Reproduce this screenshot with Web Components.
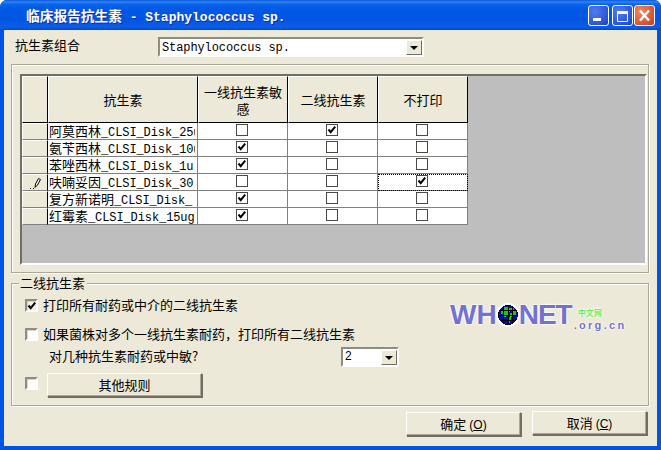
<!DOCTYPE html>
<html>
<head>
<meta charset="utf-8">
<style>
  html, body { margin: 0; padding: 0; }
  body { font: 13px "Noto Sans CJK SC", "Liberation Sans", sans-serif; color: #000; }
</style>
</head>
<body>
<win-window>
  <win-titlebar slot="title"><globe-icon slot="icon" size="15"></globe-icon>临床报告抗生素<latin-text> - Staphylococcus sp.</latin-text></win-titlebar>

  <div style="display:flex;align-items:center;padding:7px 0 0 11px;height:20px">
    <span style="width:143px;margin-top:-5px">抗生素组合</span>
    <win-combo style="width:266px"><latin-text>Staphylococcus sp.</latin-text></win-combo>
  </div>

  <win-group style="margin:7px 0 0 7px;height:209px;padding:9px 0 0 8px">
    <abx-grid></abx-grid>
  </win-group>

  <win-group legend="二线抗生素" style="margin:10px 0 0 7px;height:123px">
    <div style="display:grid;grid-template-columns:1fr 190px;height:100%">
      <div style="display:flex;flex-direction:column;padding:15px 0 0 13px">
        <div style="display:flex;align-items:center;gap:5px;height:13px">
          <win-check checked></win-check><span style="margin-top:-2px">打印所有耐药或中介的二线抗生素</span>
        </div>
        <div style="display:flex;align-items:center;gap:5px;height:13px;margin-top:16px;white-space:nowrap">
          <win-check></win-check><span style="margin-top:-2px">如果菌株对多个一线抗生素耐药，打印所有二线抗生素</span>
        </div>
        <div style="display:flex;align-items:center;height:20px;margin-top:6px;padding-left:24px;white-space:nowrap">
          <span style="width:292px;margin-top:-3px">对几种抗生素耐药或中敏?</span>
          <win-combo style="width:58px;font:12px 'Liberation Sans',sans-serif">2</win-combo>
        </div>
        <div style="display:flex;align-items:center;gap:9px;height:24px;margin-top:6px">
          <win-check style="margin-top:-3px"></win-check><win-button style="width:155px">其他规则</win-button>
        </div>
      </div>
      <whonet-logo></whonet-logo>
    </div>
  </win-group>

  <div style="display:flex;justify-content:flex-end;align-items:flex-start;gap:11px;padding:5px 10px 0 0">
    <win-button style="width:115px;margin-top:1px">确定 <key-hint>O</key-hint></win-button>
    <win-button style="width:115px">取消 <key-hint>C</key-hint></win-button>
  </div>
</win-window>

<script>
customElements.define('latin-text', class extends HTMLElement {
  constructor () {
    super()
    this.attachShadow({ mode: 'open' }).innerHTML = `<style>
        :host { display: inline; font: var(--latin-font, 12px "Liberation Mono", monospace); letter-spacing: var(--latin-spacing, -0.1px); }
      </style><slot></slot>`
  }
})

customElements.define('key-hint', class extends HTMLElement {
  constructor () {
    super()
    this.attachShadow({ mode: 'open' }).innerHTML = `<style>
        :host { display: inline; font: 12px "Liberation Sans", sans-serif; }
        u { text-underline-offset: 1px; }
      </style>(<u><slot></slot></u>)`
  }
})

customElements.define('globe-icon', class extends HTMLElement {
  constructor () {
    super()
    const size = this.getAttribute('size') || 20
    this.attachShadow({ mode: 'open' }).innerHTML = `
      <style>
        :host { display: block; width: ${size}px; height: ${size}px; }
        svg { display: block; width: 100%; height: 100%; }
      </style>
      <svg viewBox="0 0 20 20" shape-rendering="crispEdges">
        <defs><clipPath id="c"><circle cx="10" cy="10" r="9.5"/></clipPath></defs>
        <circle cx="10" cy="10" r="10" fill="#000"/>
        <g clip-path="url(#c)">
          <rect width="20" height="20" fill="#0a0aa8"/>
          <path d="M5 2h5v2h2v3h-2v3H8v2H5V9H3V5h2z" fill="#18c818"/>
          <path d="M11 3h5v3h2v4h-3v2h-3V8h2V5h-3z" fill="#18c818"/>
          <path d="M10 12h3v3h-1v3h-2z" fill="#18c818"/>
          <path d="M1 5.500h18M0 10.500h20M1 15h18" stroke="#000" stroke-width="1" fill="none"/>
          <path d="M5.500 1v18M10 0v20M14.500 1v18" stroke="#000" stroke-width="1" fill="none"/>
        </g>
      </svg>`
  }
})

customElements.define('win-window', class extends HTMLElement {
  constructor () {
    super()
    this.attachShadow({ mode: 'open' }).innerHTML = `
      <style>
        :host { display: flex; flex-direction: column; width: 661px; height: 450px; box-sizing: border-box; background: #0054e3; border-radius: 7px 7px 0 0; overflow: hidden; }
        #body { flex: 1; margin: 0 4px 4px 4px; background: #ece9d8; }
      </style>
      <slot name="title"></slot>
      <div id="body"><slot></slot></div>`
  }
})

customElements.define('win-titlebar', class extends HTMLElement {
  constructor () {
    super()
    this.attachShadow({ mode: 'open' }).innerHTML = `
      <style>
        :host {
          display: flex; align-items: center; height: 30px; box-sizing: border-box; padding: 1px 6px 0 8px;
          background: linear-gradient(#0a57d8 0, #2f86f5 2px, #0a63ea 4px, #0058e6 10px, #0355e0 20px, #0a5ee8 27px, #0048c8 30px);
          color: #fff; font-weight: bold; font-size: 13.700px; white-space: pre;
          text-shadow: 1px 1px 0 #0f2f9c;
          --latin-font: bold 13px "Liberation Mono", monospace;
          --latin-spacing: 0;
        }
        #text { flex: 1; padding-left: 3px; margin-top: -1px; }
        .b { width: 21px; height: 21px; box-sizing: border-box; border: 1px solid #fff; border-radius: 3px; margin-left: 3px; display: flex; }
        .blue { background: radial-gradient(circle at 30% 30%, #4f7df0, #2a55d8 70%, #1c3fc0); }
        .red { background: radial-gradient(circle at 30% 30%, #ee8a66, #db5530 65%, #c23e18); margin-left: 1px; }
        svg { display: block; }
      </style>
      <slot name="icon"></slot>
      <div id="text"><slot></slot></div>
      <div class="b blue"><svg width="19" height="19"><rect x="4" y="12" width="8" height="3" fill="#fff"/></svg></div>
      <div class="b blue"><svg width="19" height="19"><path d="M4.500 6.500h10v9h-10z" fill="none" stroke="#fff"/><rect x="4" y="5" width="11" height="3" fill="#fff"/></svg></div>
      <div class="b red"><svg width="19" height="19"><path d="M5 4.500l9 10M14 4.500l-9 10" stroke="#fff" stroke-width="2.400" fill="none"/></svg></div>`
  }
})

customElements.define('win-combo', class extends HTMLElement {
  constructor () {
    super()
    this.attachShadow({ mode: 'open' }).innerHTML = `
      <style>
        :host {
          display: flex; height: 20px; box-sizing: border-box; background: #fff; padding-left: 2px;
          border: 2px solid; border-color: #8f8d80 #fff #fff #8f8d80; white-space: nowrap;
        }
        #v { flex: 1; line-height: 14px; overflow: hidden; }
        #b { width: 16px; height: 15px; margin: 1px 0 0 0; box-sizing: border-box; background: #ece9d8; border: 1px solid; border-color: #fff #716f64 #716f64 #fff; display: flex; align-items: center; justify-content: center; }
        svg { display: block; }
      </style>
      <div id="v"><slot></slot></div>
      <div id="b"><svg width="8" height="4"><path d="M0 0h8L4 4z" fill="#000"/></svg></div>`
  }
})

customElements.define('win-group', class extends HTMLElement {
  constructor () {
    super()
    const legend = this.getAttribute('legend')
    this.attachShadow({ mode: 'open' }).innerHTML = `
      <style>
        :host {
          display: block; position: relative; box-sizing: border-box; width: 638px;
          border: 1px solid #aca899; box-shadow: 1px 1px 0 #fff, inset 1px 1px 0 #fff;
        }
        #l { position: absolute; left: 7px; top: -9px; padding: 0 2px 0 1px; background: #ece9d8; line-height: 15px; }
      </style>
      ${legend ? `<div id="l">${legend}</div>` : ''}
      <slot></slot>`
  }
})

customElements.define('win-check', class extends HTMLElement {
  constructor () {
    super()
    const checked = this.hasAttribute('checked')
    this.attachShadow({ mode: 'open' }).innerHTML = `
      <style>
        :host { display: block; flex: none; width: 13px; height: 13px; box-sizing: border-box; background: #fff; border: 2px solid; border-color: #8f8d80 #fff #fff #8f8d80; box-shadow: inset 1px 1px 0 #d8d5c4; }
        :host([flat]) { width: 12px; height: 12px; margin: -2px 0 0 -1px; border: 1px solid #4a4a44; box-shadow: none; }
        :host([checked]:not([flat])) { background: #f1efe2; }
        svg { display: block; }
      </style>
      ${checked ? '<svg width="10" height="10" viewBox="0 0 10 10"><path d="M1.500 4.500l2.200 2.600L8.200 1.600" fill="none" stroke="#000" stroke-width="2"/></svg>' : ''}`
  }
})

customElements.define('win-button', class extends HTMLElement {
  constructor () {
    super()
    this.attachShadow({ mode: 'open' }).innerHTML = `
      <style>
        :host {
          display: flex; align-items: center; justify-content: center; height: 24px; box-sizing: border-box; white-space: nowrap;
          background: #ece9d8; border: 1px solid; border-color: #fff #716f64 #716f64 #fff; box-shadow: 1px 1px 0 #716f64, inset -1px -1px 0 #aca899;
        }
        div { margin-top: -2px; }
      </style><div><slot></slot></div>`
  }
})

const ABX_ROWS = [
  ['阿莫西林', '_CLSI_Disk_25ug', 0, 1, 0],
  ['氨苄西林', '_CLSI_Disk_10ug', 1, 0, 0],
  ['苯唑西林', '_CLSI_Disk_1u', 1, 0, 0],
  ['呋喃妥因', '_CLSI_Disk_30', 0, 0, 1],
  ['复方新诺明', '_CLSI_Disk_', 1, 0, 0],
  ['红霉素', '_CLSI_Disk_15ug', 1, 0, 0]
]

customElements.define('abx-grid', class extends HTMLElement {
  constructor () {
    super()
    const check = (on) => `<win-check flat ${on ? 'checked' : ''}></win-check>`
    const rows = ABX_ROWS.map((r, i) => `
      <div class="ind">${i === 3 ? this.pencil() : ''}</div>
      <div class="cell name"><div class="t">${r[0]}<latin-text>${r[1]}</latin-text></div></div>
      <div class="cell">${check(r[2])}</div>
      <div class="cell">${check(r[3])}</div>
      <div class="cell${i === 3 ? ' focus' : ''}">${check(r[4])}</div>`).join('')
    this.attachShadow({ mode: 'open' }).innerHTML = `
      <style>
        :host {
          display: block; width: 627px; height: 191px; box-sizing: border-box; background: #bebebe;
          border: 2px solid; border-color: #716f64 #fff #fff #716f64;
        }
        #g { display: grid; grid-template-columns: 26px 150px 90px 90px 90px; grid-template-rows: 47px repeat(6, 17px); width: max-content; }
        .h, .ind { background: #ece9d8; box-sizing: border-box; border: 1px solid; border-color: #fff #000 #000 #fff; }
        .h { display: flex; align-items: center; justify-content: center; text-align: center; line-height: 17px; padding: 0 4px; }
        .ind { border-color: #fff #000 #808080 #fff; display: flex; align-items: center; justify-content: flex-end; padding-right: 6px; }
        .cell { background: #fff; box-sizing: border-box; border-right: 1px solid #808080; border-bottom: 1px solid #808080; display: flex; align-items: center; justify-content: center; }
        .name { display: block; padding-left: 1px; overflow: hidden; white-space: nowrap; line-height: 15px; }
        .t { overflow: hidden; height: 16px; margin-right: 2px; }
        .focus { outline: 1px dotted #000; outline-offset: -1px; }
        svg { display: block; }
      </style>
      <div id="g">
        <div class="h"></div>
        <div class="h">抗生素</div>
        <div class="h">一线抗生素敏感</div>
        <div class="h">二线抗生素</div>
        <div class="h">不打印</div>
        ${rows}
      </div>`
  }

  pencil () {
    return '<svg width="11" height="12" viewBox="0 0 11 12"><path d="M5 10.500L5.500 7l3-5.500 2 1-3 5.500z" fill="#fff" stroke="#000"/><path d="M0 11.500h1M3 11.500h1" stroke="#000"/></svg>'
  }
})

customElements.define('whonet-logo', class extends HTMLElement {
  constructor () {
    super()
    this.attachShadow({ mode: 'open' }).innerHTML = `
      <style>
        :host { display: block; padding: 15px 0 0 0; margin-left: -8px; color: #7373cf; }
        #r { display: flex; align-items: flex-start; text-shadow: 0 0 2px #fff, 0 0 2px #fff, 0 0 3px #fff; }
        .big { font: bold 28px/32px "Liberation Sans", sans-serif; }
        .net { letter-spacing: -1px; }
        globe-icon { margin: 6px 1px 0 1px; border-radius: 50%; box-shadow: 0 0 0 2px #fff; flex: none; }
        #side { display: flex; flex-direction: column; margin-left: 2px; padding-top: 9px; }
        #cn { font-size: 8px; font-weight: bold; line-height: 10px; color: #66ee66; padding-left: 4px; letter-spacing: 0.2px; }
        #org { font: bold 11px/12px "Liberation Sans", sans-serif; letter-spacing: 2.300px; white-space: nowrap; padding-top: 1px; }
      </style>
      <div id="r">
        <div class="big">WH</div>
        <globe-icon size="20"></globe-icon>
        <div class="big net">NET</div>
        <div id="side"><div id="cn">中文网</div><div id="org">.org.cn</div></div>
      </div>`
  }
})
</script>
</body>
</html>
